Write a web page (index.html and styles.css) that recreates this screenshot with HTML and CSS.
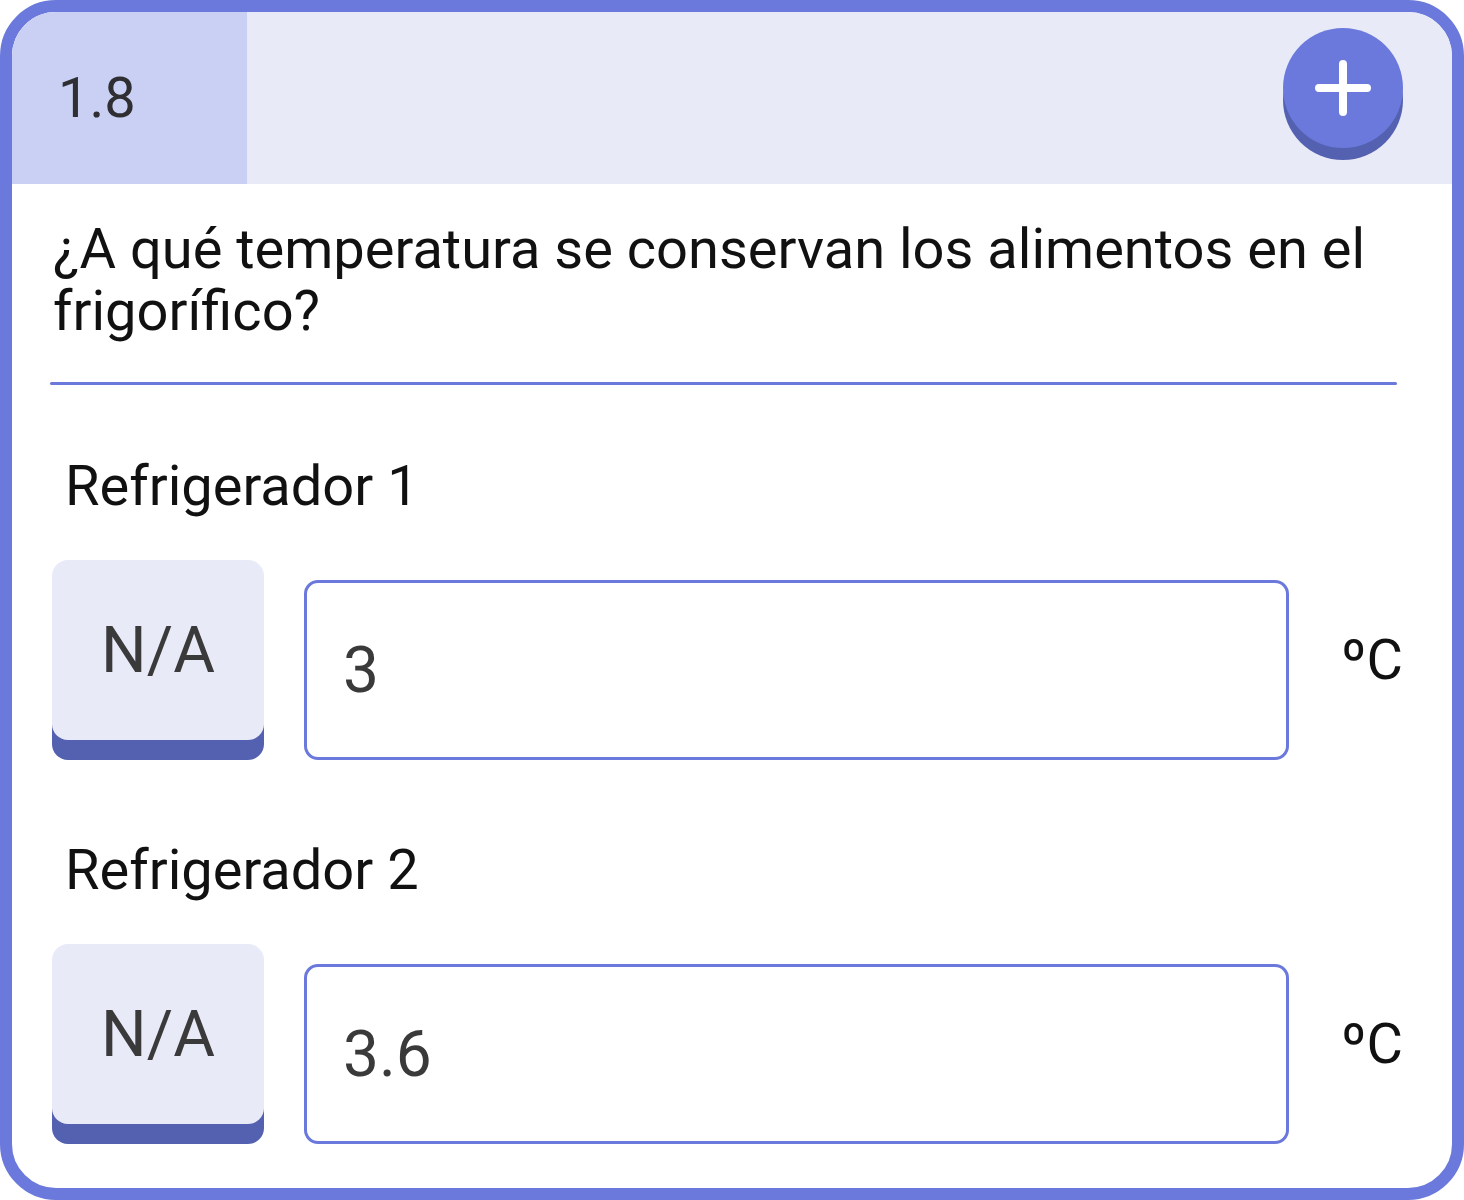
FILE: index.html
```html
<!DOCTYPE html>
<html lang="es">
<head>
  <meta charset="UTF-8">
  <meta name="viewport" content="width=device-width, initial-scale=1.0">
  <title>Pregunta 1.8</title>
  <link rel="stylesheet" href="styles.css">
</head>
<body>

<div class="card">
  <div class="card-header">
    <div class="question-num">1.8</div>
    <button class="add-btn" aria-label="Añadir">
      <svg width="56" height="56" viewBox="0 0 56 56">
        <path d="M28 4 V52 M4 28 H52" stroke="#fff" stroke-width="8" stroke-linecap="round" fill="none"/>
      </svg>
    </button>
  </div>

  <p class="question">¿A qué temperatura se conservan los alimentos en el frigorífico?</p>
  <div class="divider"></div>

  <div class="field">
    <div class="field-label">Refrigerador 1</div>
    <div class="field-row">
      <button class="na-btn">N/A</button>
      <input class="temp-input" type="text" value="3">
      <span class="unit">ºC</span>
    </div>
  </div>

  <div class="field">
    <div class="field-label">Refrigerador 2</div>
    <div class="field-row">
      <button class="na-btn">N/A</button>
      <input class="temp-input" type="text" value="3.6">
      <span class="unit">ºC</span>
    </div>
  </div>
</div>

</body>
</html>
```

FILE: styles.css
```css
body {
  margin: 0;
  font-family: Roboto, "Liberation Sans", sans-serif;
  background: #fff;
}
.card {
  width: 1464px;
  height: 1200px;
  box-sizing: border-box;
  border: 12px solid #6a79db;
  border-radius: 56px;
  overflow: hidden;
  background: #fff;
}
.card-header {
  display: flex;
  height: 172px;
  background: #e8eaf8;
}
.question-num {
  width: 235px;
  box-sizing: border-box;
  padding-left: 46px;
  display: flex;
  align-items: center;
  background: #cad0f3;
  color: #2e2e33;
  font-size: 56px;
}
.add-btn {
  margin: 16px 49px 0 auto;
  width: 120px;
  height: 120px;
  border: none;
  border-radius: 50%;
  background: #6a79db;
  box-shadow: 0 12px 0 #5461b0;
  display: flex;
  align-items: center;
  justify-content: center;
  padding: 0;
}
.question {
  margin: 34px 40px 0 41px;
  font-size: 56px;
  line-height: 62px;
  color: #111;
}
.divider {
  height: 3px;
  margin: 40px 55px 0 38px;
  background: #6a79db;
  border-radius: 2px;
}
.field {
  margin-top: 68px;
}
.field + .field {
  margin-top: 77px;
}
.field-label {
  padding-left: 53px;
  font-size: 56px;
  line-height: 66px;
  color: #111;
}
.field-row {
  display: flex;
  align-items: flex-start;
  gap: 40px;
  margin-top: 41px;
  padding: 0 49px 0 40px;
}
.na-btn {
  flex: none;
  width: 212px;
  height: 180px;
  border: none;
  border-radius: 16px;
  background: #e8eaf8;
  box-shadow: 0 20px 0 #5461b0;
  color: #3a3a3a;
  font-family: Roboto, "Liberation Sans", sans-serif;
  font-size: 64px;
  padding: 0;
}
.temp-input {
  flex: 1;
  min-width: 0;
  height: 180px;
  box-sizing: border-box;
  margin-top: 20px;
  border: 3px solid #6a79db;
  border-radius: 14px;
  padding: 0 0 0 36px;
  font-family: Roboto, "Liberation Sans", sans-serif;
  font-size: 64px;
  color: #3a3a3a;
  outline: none;
}
.unit {
  flex: none;
  margin-left: 12px;
  margin-top: 70px;
  font-size: 56px;
  line-height: 60px;
  color: #111;
}
```
